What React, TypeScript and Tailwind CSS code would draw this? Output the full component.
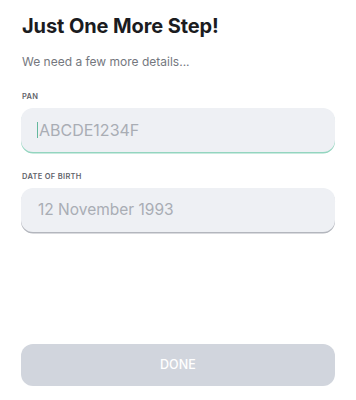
import { useState } from 'react';

export default function App() {
  const [pan, setPan] = useState('');
  const [dob, setDob] = useState('');

  return (
    <div className="w-[356px] h-[400px] bg-white flex flex-col px-[21px] font-['Inter',sans-serif]">
      {/* ── Header ── */}
      <h1 className="mt-[12px] text-[20px] leading-[28px] font-bold text-[#1b1c1f] tracking-[-0.1px] pl-px">
        Just One More Step!
      </h1>
      <p className="mt-[14px] text-[12px] leading-[16px] text-[#74777e] pl-px">
        We need a few more details...
      </p>

      {/* ── PAN ── */}
      <label className="mt-[22px] text-[7.5px] leading-[10px] font-semibold text-[#5f636a] tracking-[0.3px] pl-px">
        PAN
      </label>
      <div className="mt-[6px] h-[44px] rounded-[12px] bg-[#eef0f4] shadow-[0_1.5px_0_#93d5bf] flex items-center pl-[16px]">
        <span className="w-px h-[16px] bg-[#64b89d] mr-px" />
        <input
          value={pan}
          onChange={(e) => setPan(e.target.value)}
          placeholder="ABCDE1234F"
          className="flex-1 bg-transparent outline-none text-[16px] text-[#3a3c40] placeholder:text-[#a9adb4]"
        />
      </div>

      {/* ── Date of birth ── */}
      <label className="mt-[20px] text-[7.5px] leading-[10px] font-semibold text-[#5f636a] tracking-[0.3px] pl-px">
        DATE OF BIRTH
      </label>
      <div className="mt-[6px] h-[44px] rounded-[12px] bg-[#eef0f4] shadow-[0_1.5px_0_#b3b6bd] flex items-center pl-[17px]">
        <input
          value={dob}
          onChange={(e) => setDob(e.target.value)}
          placeholder="12 November 1993"
          className="flex-1 bg-transparent outline-none text-[15.5px] text-[#3a3c40] placeholder:text-[#a9adb4]"
        />
      </div>

      {/* ── Action ── */}
      <button
        type="button"
        disabled
        className="mt-[112px] h-[42px] rounded-[12px] bg-[#d1d5dd] text-white text-[12.5px] font-medium tracking-[0.1px]"
      >
        DONE
      </button>
    </div>
  );
}
